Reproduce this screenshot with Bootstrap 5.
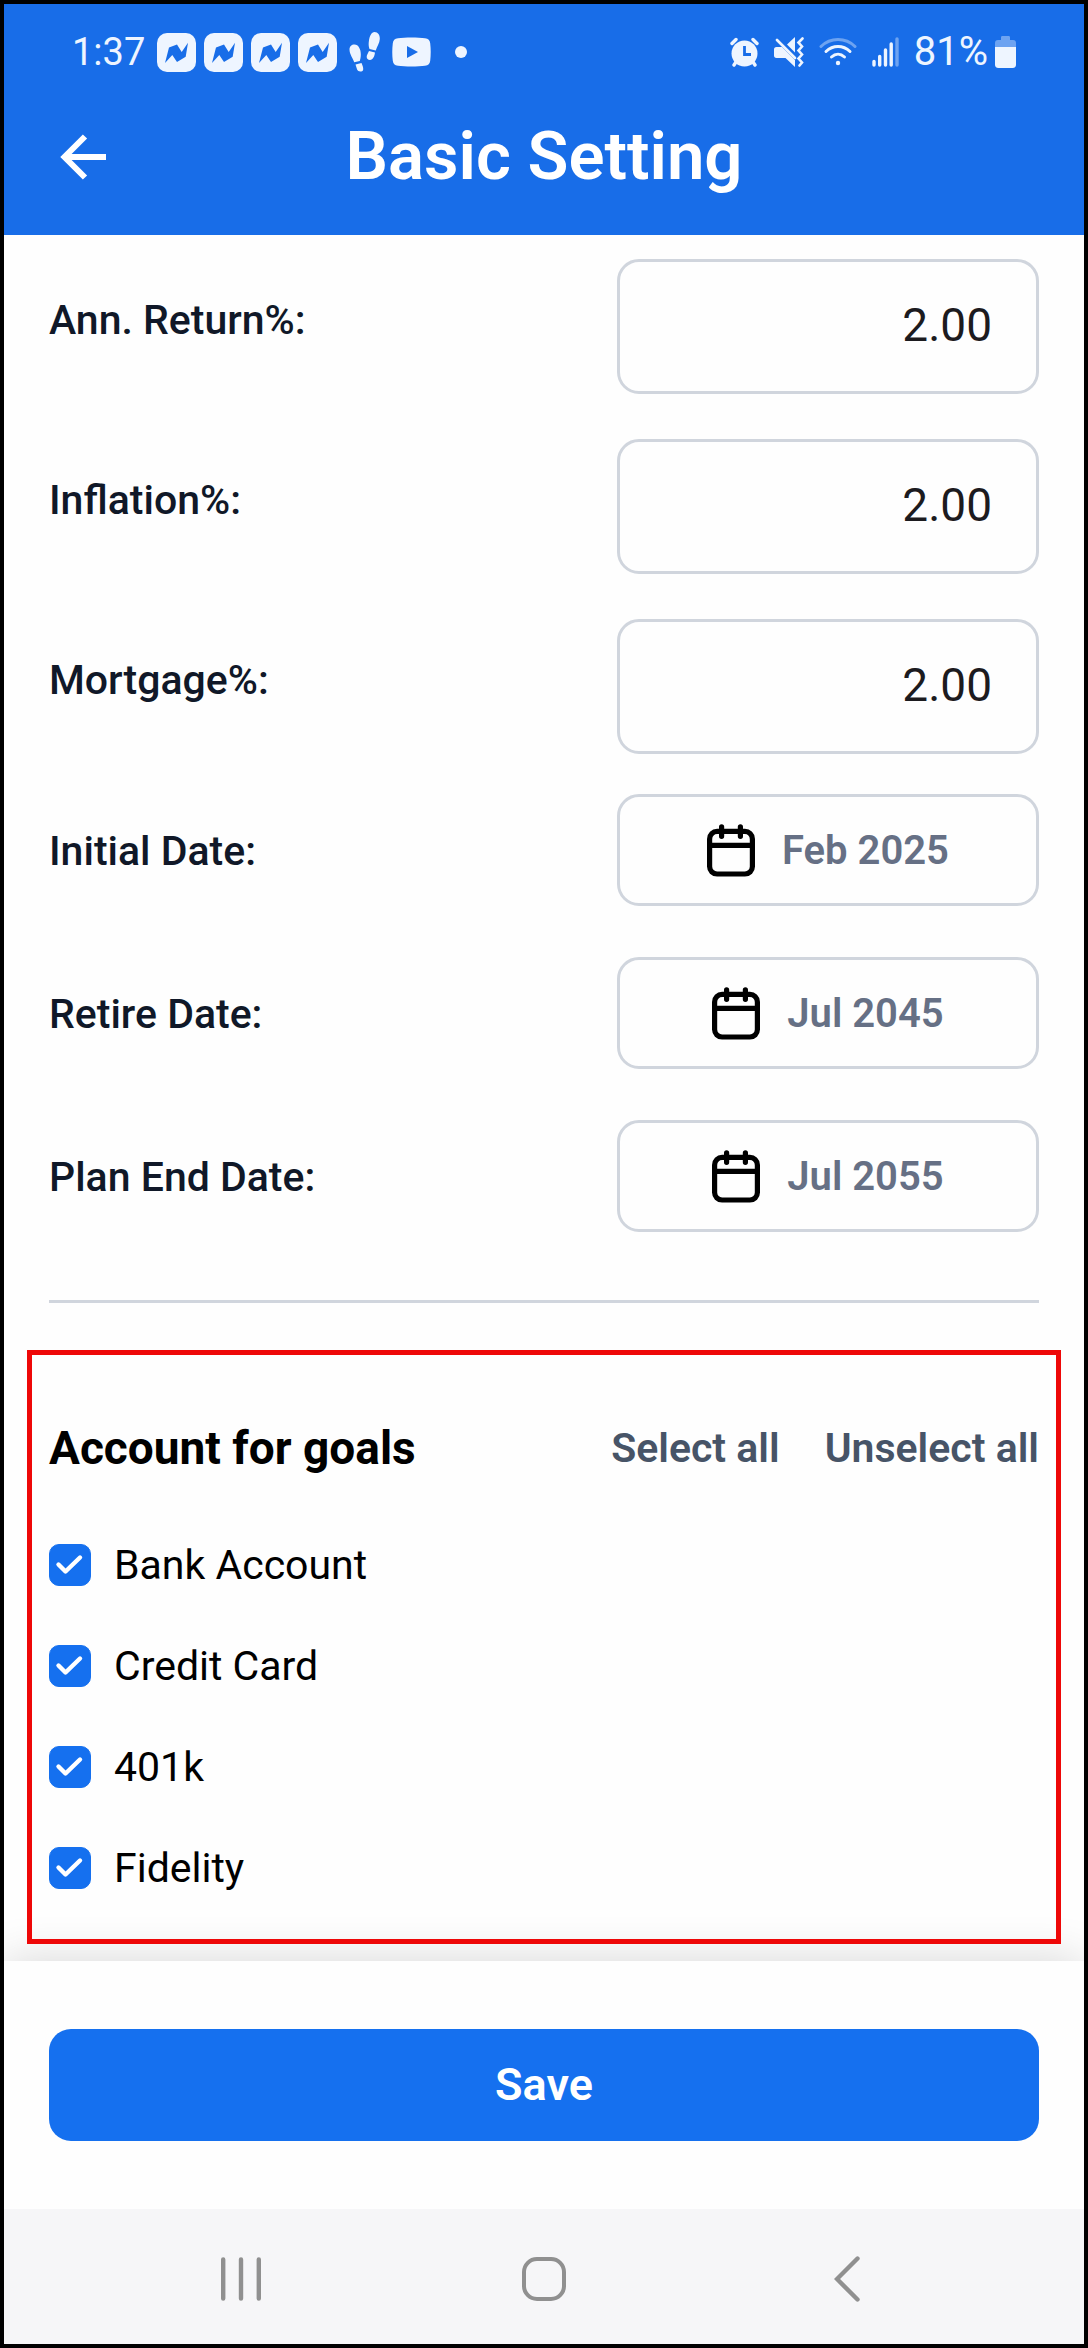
<!DOCTYPE html>
<html lang="en">
<head>
<meta charset="utf-8">
<meta name="viewport" content="width=device-width, initial-scale=1">
<title>Basic Setting</title>
<link href="https://cdn.jsdelivr.net/npm/bootstrap@5.3.0/dist/css/bootstrap.min.css" rel="stylesheet">
<style>
  :root { --brand: #186de8; --action: #1570ef; --line: #d0d5dd; --soft: #eef5ff; }
  body { font-family: Roboto, "Liberation Sans", sans-serif; font-size: 41px; line-height: 48px; color: #000; background: #fefefe; border: 4px solid #000; }
  svg { display: block; flex: none; }

  .top-area { background: var(--brand); padding-bottom: 21px; }
  .status-bar { height: 96px; padding: 0 68px; font-size: 40px; color: var(--soft); }
  .status-left, .status-right { display: flex; align-items: center; }
  .status-left { gap: 8px; }
  .status-right { gap: 15px; }
  .clock { margin-right: 4px; font-size: 38px; }
  .power { gap: 7px; }
  .title-bar { display: grid; grid-template-columns: 1fr auto 1fr; align-items: center; height: 114px; padding: 0 56px; }
  .title-bar h1 { font-size: 67px; line-height: 80px; font-weight: 600; padding-bottom: 2px; }

  .settings { padding: 24px 45px 0; }
  .setting-row { display: grid; grid-template-columns: 1fr 422px; align-items: center; }
  .setting-row label { color: #101828; font-weight: 500; }
  .rates { display: grid; gap: 45px; }
  .rates label { padding-bottom: 14px; }
  .dates { display: grid; gap: 51px; margin-top: 40px; }
  .dates label { padding-top: 2px; }
  .rate-box { height: 135px; border: 3px solid var(--line); border-radius: 22px; padding: 0 44px 4px; font-size: 46px; line-height: 54px; text-align: right; color: #1c1b1f; background: transparent; }
  .date-btn { height: 112px; border: 3px solid var(--line); border-radius: 22px; padding: 0; gap: 27px; font-size: 40px; line-height: 48px; font-weight: 600; color: #667085; }
  .date-btn span { padding-top: 2px; }
  .divider { margin: 68px 0 0; border-top: 3px solid var(--line); opacity: 1; }

  .goals { margin: 47px 23px 17px; border: 5px solid #ee0808; padding: 66px 17px 47px; }
  .goals h2 { font-size: 46px; line-height: 54px; font-weight: 700; }
  .pick-group { gap: 45px; }
  .pick-btn { padding: 0; border: 0; font-size: 41px; line-height: 54px; font-weight: 600; color: #475467; }
  .goal-list { display: grid; gap: 53px; margin-top: 66px; }
  .goal-item { display: flex; align-items: center; gap: 23px; min-height: 48px; }
  .goal-item .form-check-input { width: 42px; height: 42px; margin: 0; border-radius: 10px; flex: none; }
  .goal-item .form-check-input:checked { background-color: var(--action); border-color: var(--action); background-size: 42px; background-image: url("data:image/svg+xml,%3csvg xmlns='http://www.w3.org/2000/svg' viewBox='0 0 42 42'%3e%3cpath fill='none' stroke='%23fff' stroke-width='4.4' stroke-linecap='round' stroke-linejoin='round' d='M9.5 20.500l7 7 14.500-14'/%3e%3c/svg%3e"); }

  .save-area { padding: 68px 45px; background: #fefefe; box-shadow: 0 0 44px rgba(0, 0, 0, .16); }
  .save-btn { height: 112px; border: 0; border-radius: 22px; background: var(--action); font-size: 45px; line-height: 54px; font-weight: 600; }
  .save-btn:hover { background: var(--brand); }
  .system-nav { display: grid; grid-template-columns: repeat(3, 1fr); justify-items: center; align-items: center; height: 135px; padding: 4px 86px 0; background: #f6f6f8; position: relative; }
  .system-nav .btn { border: 0; padding: 8px; }
</style>
</head>
<body class="d-flex flex-column min-vh-100">

<svg width="0" height="0" class="position-absolute" aria-hidden="true">
  <symbol id="app-note" viewBox="0 0 39 39">
    <rect width="39" height="39" rx="10" fill="#eef5ff"/>
    <path fill="#186de8" d="M8 30l4-15.500 8-3 4.700 7.500L31 9.700l-2.300 14L20 29l-4.700-7z"/>
  </symbol>
  <symbol id="calendar" viewBox="0 0 48 53">
    <g fill="none" stroke="#000" stroke-width="5.200" stroke-linecap="round">
      <rect x="2.600" y="7.400" width="42.800" height="42.600" rx="7.500"/>
      <path stroke-linecap="butt" d="M3 21.300h42"/>
      <path d="M14.600 2.800v9.500M33.400 2.800v9.500"/>
    </g>
  </symbol>
</svg>

<header class="top-area text-white">
  <div class="status-bar d-flex justify-content-between align-items-center">
    <div class="status-left">
      <span class="clock">1:37</span>
      <svg width="39" height="39"><use href="#app-note"/></svg>
      <svg width="39" height="39"><use href="#app-note"/></svg>
      <svg width="39" height="39"><use href="#app-note"/></svg>
      <svg width="39" height="39"><use href="#app-note"/></svg>
      <svg width="39" height="40" viewBox="0 0 39 40" fill="currentColor">
        <path d="M9.500 12.500c4 0 6.500 5 6.300 10 0 3-.5 4.500-1 6.500l-5.600 1.300C8 26 4.500 22.500 4.500 17.500c0-3 2-5 5-5z"/>
        <path d="M10.500 32.500l6-1.500c1.300 3 2 5 1.600 7-.6 2-5.200 2.200-6-.4-.6-1.800-1-3.200-1.600-5.100z"/>
        <path d="M29.500 0c3.500 0 5.500 3 5.300 7-.2 4.500-2.800 7-4 11.500L24.500 17c-1-3-1-5-.6-8 .6-5 2.600-9 5.600-9z"/>
        <path d="M24 19l6 1.500c-.4 3.500-2 7.500-5 7.500-2 0-3.500-1.200-3.300-3.500.2-1.600 1.300-3.500 2.300-5.500z"/>
      </svg>
      <svg width="39" height="30" viewBox="0 0 39 30">
        <path fill="currentColor" d="M6 1.200C13 .3 26 .3 33 1.200c3.500.4 4.800 2 5.200 5 .7 6 .7 11.600 0 17.600-.4 3-1.700 4.600-5.200 5-7 .9-20 .9-27 0-3.500-.4-4.800-2-5.200-5-.7-6-.7-11.600 0-17.600.4-3 1.700-4.600 5.200-5z"/>
        <path fill="#186de8" d="M15 9l11 6-11 6z"/>
      </svg>
      <svg class="ms-3" width="12" height="12" viewBox="0 0 12 12"><circle cx="6" cy="6" r="6" fill="currentColor"/></svg>
    </div>
    <div class="status-right">
      <svg width="29" height="30" viewBox="0 0 29 30">
        <g fill="none" stroke="currentColor" stroke-linecap="round" stroke-width="3.400"><path d="M2 6.500L6 2.500M27 6.500L23 2.500M6 25l-2 3M23 25l2 3"/></g>
        <circle cx="14.500" cy="16.500" r="13" fill="currentColor"/>
        <path d="M14.500 9v8.500h6.500" fill="none" stroke="#186de8" stroke-width="2.800"/>
      </svg>
      <svg width="30" height="30" viewBox="0 0 30 30">
        <path fill="currentColor" d="M2.500 10H8l13 13v7l-9.500-9H2.500C.8 21 0 20 0 18.500v-6C0 11 .8 10 2.500 10zM21 0v15.500l-8-8z"/>
        <path fill="none" stroke="currentColor" stroke-width="2.600" stroke-linecap="round" d="M3 3l18 18M28.500 1.500l-4 4 3.500 4-3.500 4 3.500 4-3.500 4 3.500 4-2.500 3"/>
      </svg>
      <svg width="38" height="30" viewBox="0 0 38 30" fill="none" stroke="currentColor" stroke-width="3" stroke-linecap="round">
        <path opacity=".4" d="M2 9.500c9.500-9.300 24.500-9.300 34 0"/>
        <path d="M7 14.500c7-6.700 17-6.700 24 0M12.500 20c4-3.700 9-3.700 13 0"/>
        <circle cx="19" cy="26" r="2.200" fill="currentColor" stroke="none"/>
      </svg>
      <svg width="27" height="30" viewBox="0 0 27 30" fill="none" stroke="currentColor" stroke-width="3.400" stroke-linecap="round">
        <path d="M2 24.500v3.500M7.700 19.500V28M13.500 13v15M19.200 7v21"/><path opacity=".4" d="M25 2v26"/>
      </svg>
      <span class="power d-flex align-items-center">81%
        <svg width="21" height="32" viewBox="0 0 21 32">
          <path fill="currentColor" opacity=".4" d="M6 1.500C6 .5 6.500 0 7.500 0h6c1 0 1.500.5 1.500 1.500V4h3c2 0 3 1.200 3 3v4H0V7c0-1.800 1-3 3-3h3z"/>
          <path fill="currentColor" d="M0 11h21v17.500c0 2-1 3.500-3.500 3.500h-14C1 32 0 30.500 0 28.500z"/>
        </svg>
      </span>
    </div>
  </div>
  <div class="title-bar">
    <a href="#" class="text-white" aria-label="Back">
      <svg width="46" height="46" viewBox="0 0 46 46" fill="none" stroke="currentColor" stroke-width="6"><path d="M25 2.500L4.500 23 25 43.500M5 23h41"/></svg>
    </a>
    <h1 class="m-0">Basic Setting</h1>
  </div>
</header>

<main class="flex-grow-1">
  <form class="settings" id="settings">
    <div class="rates">
      <div class="setting-row"><label for="ret">Ann. Return%:</label><input class="form-control rate-box" id="ret" type="text" inputmode="decimal" value="2.00"></div>
      <div class="setting-row"><label for="inf">Inflation%:</label><input class="form-control rate-box" id="inf" type="text" inputmode="decimal" value="2.00"></div>
      <div class="setting-row"><label for="mor">Mortgage%:</label><input class="form-control rate-box" id="mor" type="text" inputmode="decimal" value="2.00"></div>
    </div>
    <div class="dates">
      <div class="setting-row"><label for="d1">Initial Date:</label><button type="button" id="d1" class="btn date-btn d-flex align-items-center justify-content-center"><svg width="48" height="53"><use href="#calendar"/></svg><span>Feb 2025</span></button></div>
      <div class="setting-row"><label for="d2">Retire Date:</label><button type="button" id="d2" class="btn date-btn d-flex align-items-center justify-content-center"><svg width="48" height="53"><use href="#calendar"/></svg><span>Jul 2045</span></button></div>
      <div class="setting-row"><label for="d3">Plan End Date:</label><button type="button" id="d3" class="btn date-btn d-flex align-items-center justify-content-center"><svg width="48" height="53"><use href="#calendar"/></svg><span>Jul 2055</span></button></div>
    </div>
    <hr class="divider">
  </form>

  <section class="goals position-relative">
    <div class="d-flex justify-content-between align-items-center">
      <h2 class="m-0">Account for goals</h2>
      <div class="pick-group d-flex">
        <button type="button" class="btn pick-btn">Select all</button>
        <button type="button" class="btn pick-btn">Unselect all</button>
      </div>
    </div>
    <div class="goal-list">
      <div class="goal-item"><input class="form-check-input" type="checkbox" id="g1" checked><label for="g1">Bank Account</label></div>
      <div class="goal-item"><input class="form-check-input" type="checkbox" id="g2" checked><label for="g2">Credit Card</label></div>
      <div class="goal-item"><input class="form-check-input" type="checkbox" id="g3" checked><label for="g3">401k</label></div>
      <div class="goal-item"><input class="form-check-input" type="checkbox" id="g4" checked><label for="g4">Fidelity</label></div>
    </div>
  </section>
</main>

<div class="save-area">
  <button type="submit" form="settings" class="btn btn-primary save-btn w-100">Save</button>
</div>
<nav class="system-nav" aria-label="System">
  <button type="button" class="btn" aria-label="Recents"><svg width="40" height="44" viewBox="0 0 40 44" fill="none" stroke="#909090" stroke-width="4.400" stroke-linecap="round"><path d="M2.200 2.500v39M20 2.500v39M37.800 2.500v39"/></svg></button>
  <button type="button" class="btn" aria-label="Home"><svg width="44" height="44" viewBox="0 0 44 44" fill="none" stroke="#909090" stroke-width="4"><rect x="2" y="2" width="40" height="40" rx="13"/></svg></button>
  <button type="button" class="btn" aria-label="Back"><svg width="26" height="46" viewBox="0 0 26 46" fill="none" stroke="#909090" stroke-width="4.400" stroke-linecap="round"><path d="M23.500 2.500L3 23l20.500 20.500"/></svg></button>
</nav>

<script src="https://cdn.jsdelivr.net/npm/bootstrap@5.3.0/dist/js/bootstrap.bundle.min.js"></script>
</body>
</html>
